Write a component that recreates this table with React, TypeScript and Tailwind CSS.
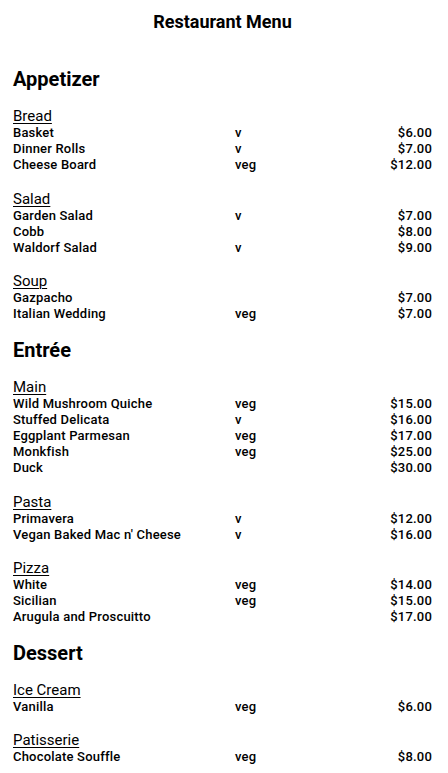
const menu = [
  {
    name: 'Appetizer',
    groups: [
      {
        name: 'Bread',
        items: [
          ['Basket', 'v', '$6.00'],
          ['Dinner Rolls', 'v', '$7.00'],
          ['Cheese Board', 'veg', '$12.00'],
        ],
      },
      {
        name: 'Salad',
        items: [
          ['Garden Salad', 'v', '$7.00'],
          ['Cobb', '', '$8.00'],
          ['Waldorf Salad', 'v', '$9.00'],
        ],
      },
      {
        name: 'Soup',
        items: [
          ['Gazpacho', '', '$7.00'],
          ['Italian Wedding', 'veg', '$7.00'],
        ],
      },
    ],
  },
  {
    name: 'Entrée',
    groups: [
      {
        name: 'Main',
        items: [
          ['Wild Mushroom Quiche', 'veg', '$15.00'],
          ['Stuffed Delicata', 'v', '$16.00'],
          ['Eggplant Parmesan', 'veg', '$17.00'],
          ['Monkfish', 'veg', '$25.00'],
          ['Duck', '', '$30.00'],
        ],
      },
      {
        name: 'Pasta',
        items: [
          ['Primavera', 'v', '$12.00'],
          ["Vegan Baked Mac n' Cheese", 'v', '$16.00'],
        ],
      },
      {
        name: 'Pizza',
        items: [
          ['White', 'veg', '$14.00'],
          ['Sicilian', 'veg', '$15.00'],
          ['Arugula and Proscuitto', '', '$17.00'],
        ],
      },
    ],
  },
  {
    name: 'Dessert',
    groups: [
      {
        name: 'Ice Cream',
        items: [['Vanilla', 'veg', '$6.00']],
      },
      {
        name: 'Patisserie',
        items: [['Chocolate Souffle', 'veg', '$8.00']],
      },
    ],
  },
]

export default function App() {
  return (
    <div className="min-h-screen bg-white text-black font-['Roboto',sans-serif] pl-[13px] pr-4 pt-2 pb-4">
      <h1 className="text-center text-lg leading-7 font-bold">Restaurant Menu</h1>

      {menu.map((cat, ci) => (
        <section key={cat.name} className={ci === 0 ? 'mt-[31px]' : 'mt-[15px]'}>
          <h2 className="text-xl leading-6 font-bold">{cat.name}</h2>
          {cat.groups.map((g) => (
            <div key={g.name} className="mt-4">
              <h3 className="text-[15px] leading-[18px] underline underline-offset-2 decoration-1">
                {g.name}
              </h3>
              <div className="grid grid-cols-[222px_1fr_auto] text-[13px] leading-[16.2px] font-medium tracking-[0.2px]">
                {g.items.map(([name, tag, price]) => (
                  <div key={name} className="contents">
                    <span>{name}</span>
                    <span>{tag}</span>
                    <span className="text-right">{price}</span>
                  </div>
                ))}
              </div>
            </div>
          ))}
        </section>
      ))}
    </div>
  )
}
